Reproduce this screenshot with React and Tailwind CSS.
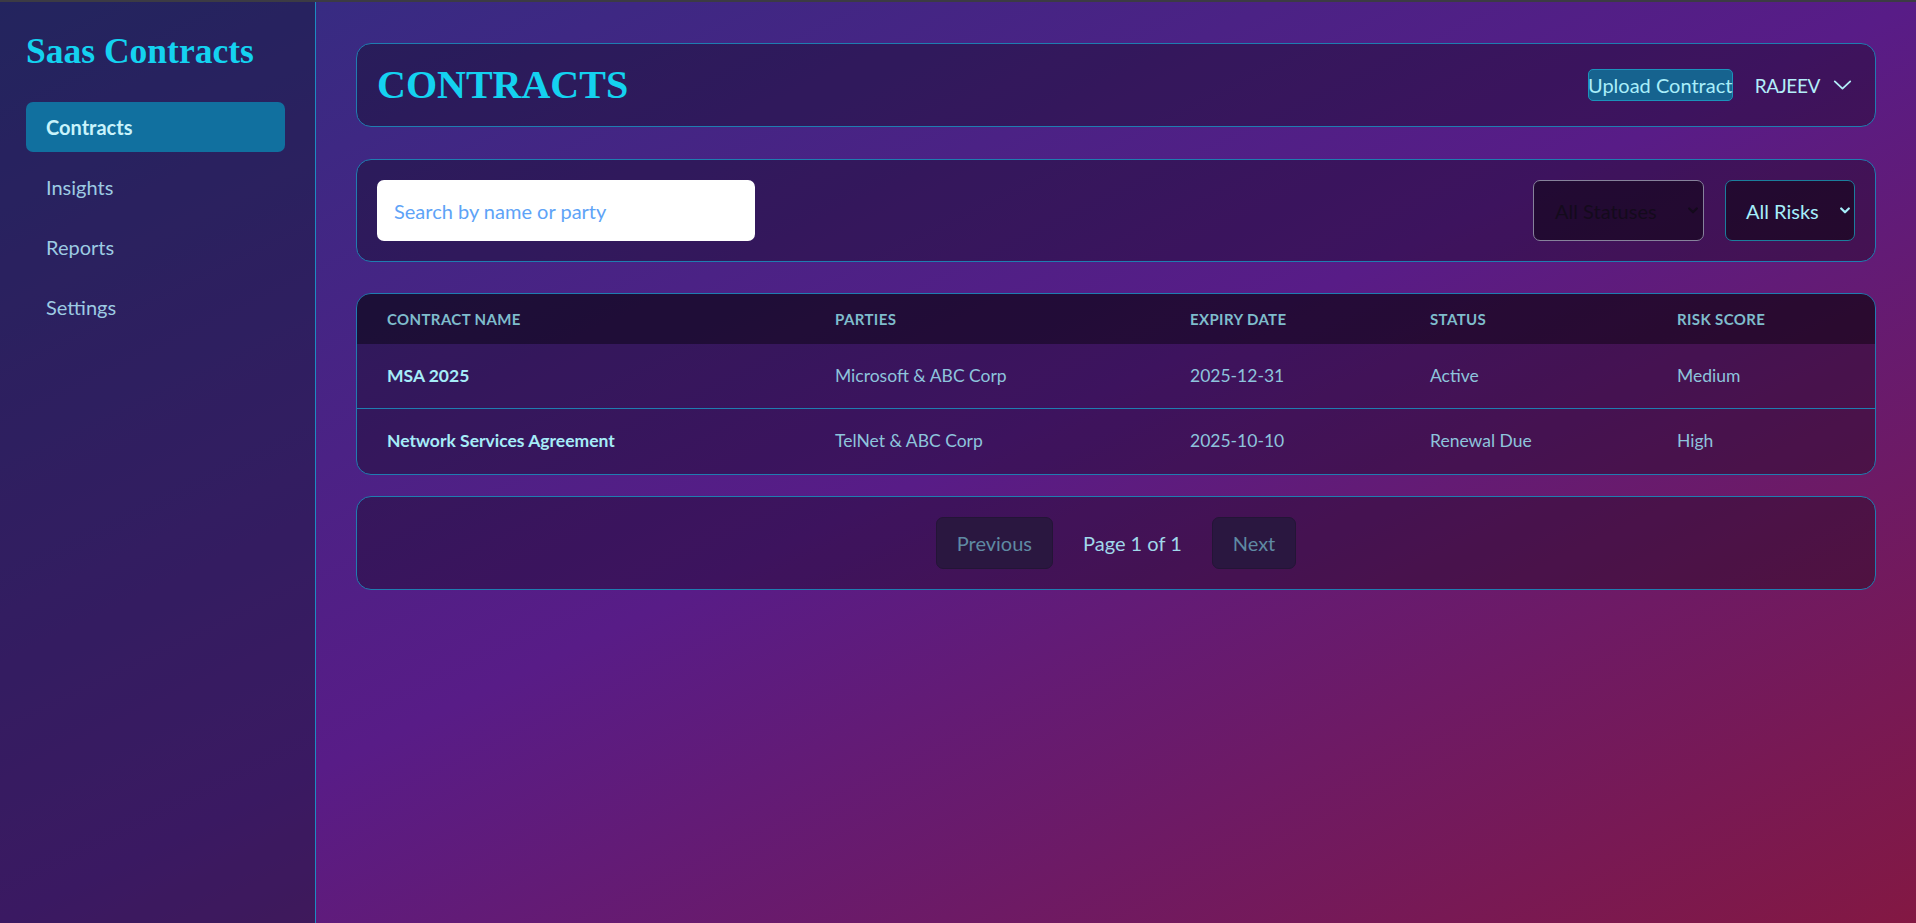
import { useState } from "react";

const contracts = [
  {
    name: "MSA 2025",
    parties: "Microsoft & ABC Corp",
    expiry: "2025-12-31",
    status: "Active",
    risk: "Medium",
  },
  {
    name: "Network Services Agreement",
    parties: "TelNet & ABC Corp",
    expiry: "2025-10-10",
    status: "Renewal Due",
    risk: "High",
  },
];

const navItems = ["Contracts", "Insights", "Reports", "Settings"];

function Chevron({ className }) {
  return (
    <svg viewBox="0 0 20 11" className={className} fill="none" stroke="currentColor" strokeWidth="2" strokeLinecap="round" strokeLinejoin="round">
      <polyline points="1.5,1.5 10,9.5 18.5,1.5" />
    </svg>
  );
}

function SelectArrow({ className }) {
  return (
    <svg viewBox="0 0 10 7" className={className} fill="none" stroke="currentColor" strokeWidth="2.2" strokeLinecap="round" strokeLinejoin="round">
      <polyline points="1.2,1.5 5,5.3 8.8,1.5" />
    </svg>
  );
}

export default function App() {
  const [active, setActive] = useState("Contracts");
  const [query, setQuery] = useState("");

  return (
    <div className="h-screen w-full flex flex-col font-['Lato',sans-serif] overflow-hidden">
      <div className="h-[2px] shrink-0 bg-[#3c3b44]" />
      <div className="flex-1 flex min-h-0 bg-linear-to-br/srgb from-[#312e81] via-[#581c87] to-[#831843]">
        <aside className="w-[316px] shrink-0 bg-[#0f172a]/40 border-r border-[#1c8cc0] pt-[32px] pl-[26px] pr-[30px]">
          <h2 className="font-['Liberation_Serif',serif] font-bold text-[35.5px] leading-none text-[#14d2f0] whitespace-nowrap">
            Saas Contracts
          </h2>
          <nav className="mt-[32px] flex flex-col gap-[10px]">
            {navItems.map((item) => (
              <button
                key={item}
                type="button"
                onClick={() => setActive(item)}
                className={
                  item === active
                    ? "h-[50px] flex items-center px-5 rounded-[7px] bg-[#11709f] text-[#c9f3fb] text-[20px] font-bold text-left"
                    : "h-[50px] flex items-center px-5 rounded-[7px] text-[#9dcbe3] text-[20px] text-left"
                }
              >
                {item}
              </button>
            ))}
          </nav>
        </aside>

        <main className="flex-1 min-w-0 pt-[41px] px-10">
          <div className="h-[84px] rounded-[15px] border border-[#1f7db0] bg-black/30 px-5 flex items-center justify-between">
            <h1 className="font-['Liberation_Serif',serif] font-bold text-[40px] leading-none text-[#14d2f0]">
              CONTRACTS
            </h1>
            <div className="flex items-center pr-[3px]">
              <button
                type="button"
                className="h-[32px] w-[145px] rounded-[5px] border border-[#1b93bb] bg-[#16638f] text-[#a9eefa] text-[20px] leading-none whitespace-nowrap flex items-center justify-center"
              >
                Upload Contract
              </button>
              <div className="ml-[22px] flex items-center text-[#b3eef9]">
                <span className="text-[19px] tracking-[-0.02em] leading-none">RAJEEV</span>
                <Chevron className="ml-[13px] w-[19px] h-[10px]" />
              </div>
            </div>
          </div>

          <div className="mt-[32px] rounded-[15px] border border-[#1f7db0] bg-black/30 p-5 flex items-center justify-between">
            <input
              value={query}
              onChange={(e) => setQuery(e.target.value)}
              placeholder="Search by name or party"
              className="w-[378px] h-[61px] rounded-[7px] bg-white pl-[17px] pr-4 text-[20px] text-gray-800 placeholder:text-[#5ea3f7] outline-none"
            />
            <div className="flex items-center gap-[21px]">
              <div className="w-[171px] h-[61px] rounded-[7px] border border-[#86829b] bg-black/45 pl-[21px] pr-[5px] flex items-center justify-between text-[#140a1c]">
                <span className="text-[20px]">All Statuses</span>
                <SelectArrow className="w-[10px] h-[7px]" />
              </div>
              <div className="w-[130px] h-[61px] rounded-[7px] border border-[#1b7e9c] bg-black/45 pl-[20px] pr-[4px] flex items-center justify-between text-[#a6eefa]">
                <span className="text-[20px]">All Risks</span>
                <SelectArrow className="w-[10px] h-[7px]" />
              </div>
            </div>
          </div>

          <div className="mt-[31px] rounded-[15px] border border-[#1f7db0] bg-black/30 overflow-hidden">
            <div className="grid grid-cols-[448px_355px_240px_247px_1fr] bg-black/40 h-[50px] items-center text-[15px] font-bold uppercase tracking-wide text-[#7fbccc]">
              <div className="pl-[30px]">Contract Name</div>
              <div className="pl-[30px]">Parties</div>
              <div className="pl-[30px]">Expiry Date</div>
              <div className="pl-[30px]">Status</div>
              <div className="pl-[30px]">Risk Score</div>
            </div>
            {contracts.map((c, i) => (
              <div
                key={c.name}
                className={
                  "grid grid-cols-[448px_355px_240px_247px_1fr] h-[65px] items-center text-[17.5px] text-[#8ec4dc]" +
                  (i < contracts.length - 1 ? " border-b border-[#1f7db0]" : "")
                }
              >
                <div className="pl-[30px] font-bold text-[#a6ecf8]">{c.name}</div>
                <div className="pl-[30px]">{c.parties}</div>
                <div className="pl-[30px]">{c.expiry}</div>
                <div className="pl-[30px]">{c.status}</div>
                <div className="pl-[30px]">{c.risk}</div>
              </div>
            ))}
          </div>

          <div className="mt-[21px] rounded-[15px] border border-[#1f7db0] bg-black/30 p-5 flex items-center justify-center gap-[30px]">
            <button
              type="button"
              disabled
              className="h-[52px] px-5 rounded-[7px] border border-[#231536] bg-[#2a1740] text-[20px] text-[#5f8aa3]"
            >
              Previous
            </button>
            <span className="text-[20px] text-[#a0d8ea]">Page 1 of 1</span>
            <button
              type="button"
              disabled
              className="h-[52px] px-5 rounded-[7px] border border-[#231536] bg-[#2a1740] text-[20px] text-[#5f8aa3]"
            >
              Next
            </button>
          </div>
        </main>
      </div>
    </div>
  );
}
